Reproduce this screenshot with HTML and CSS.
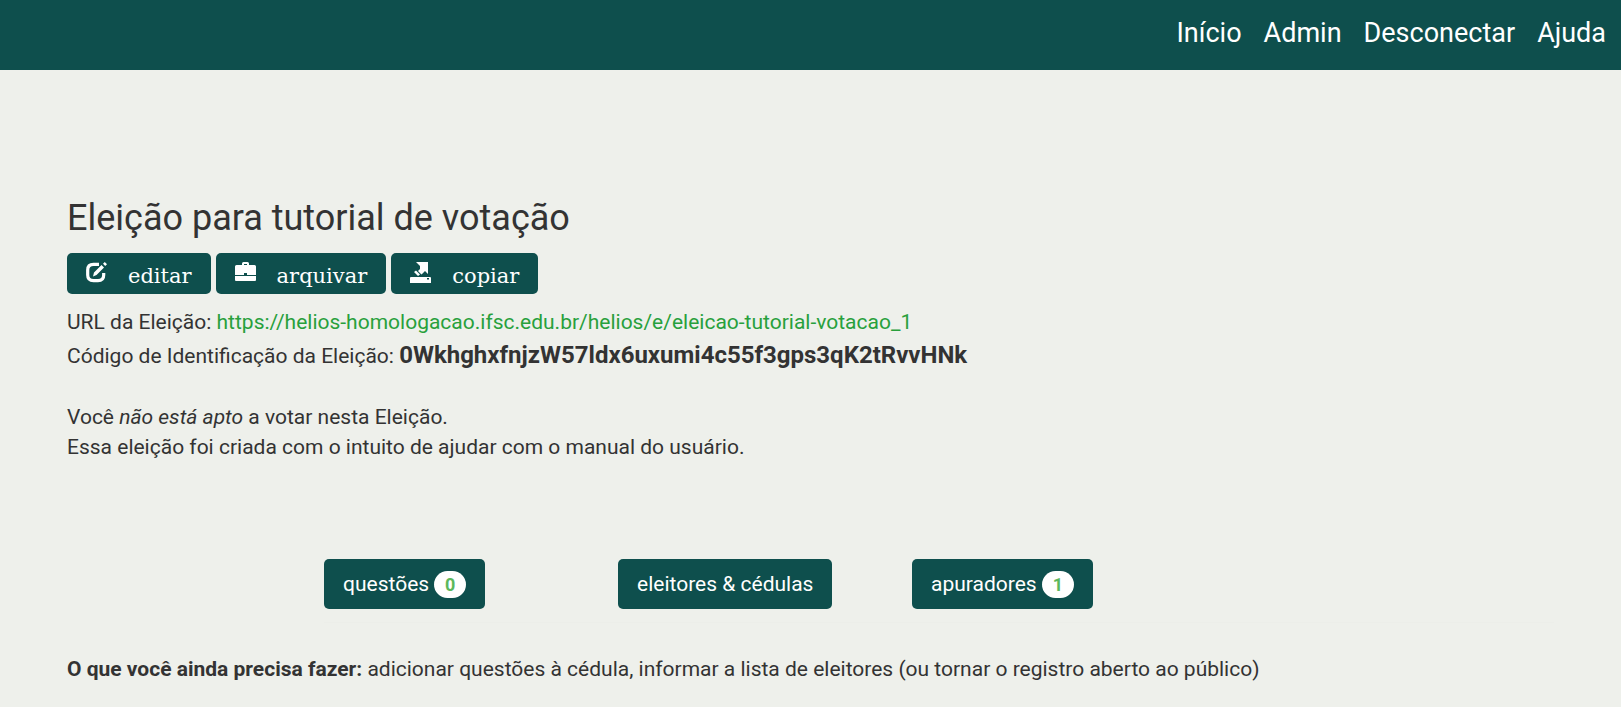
FILE: index.html
```html
<!DOCTYPE html>
<html lang="pt-BR">
<head>
<meta charset="utf-8">
<title>Eleição para tutorial de votação</title>
<link rel="stylesheet" href="styles.css">
</head>
<body>
<header class="topbar">
  <nav class="nav">
    <a href="#">Início</a>
    <a href="#">Admin</a>
    <a href="#">Desconectar</a>
    <a href="#">Ajuda</a>
  </nav>
</header>
<main class="content">
  <h1 class="title">Eleição para tutorial de votação</h1>
  <div class="actions">
    <a class="button action" href="#">
      <svg class="icon" viewBox="0 0 21 21" aria-hidden="true"><path d="M13 2.300H7.500C3.500 2.300 1.700 4.300 1.700 8V13C1.700 17 3.700 18.700 7.500 18.700H12C15.800 18.700 17.700 17 17.700 13V11" fill="none" stroke="currentColor" stroke-width="3.200"/><path d="M7 14.500L8 10.500L15.500 3L18 5.500L10.500 13ZM17 1.800L18.800 0L21 2.200L19.200 4Z" fill="currentColor"/></svg>
      <span>editar</span>
    </a>
    <a class="button action" href="#">
      <svg class="icon" viewBox="0 0 21 21" aria-hidden="true"><path d="M7 3V1.500Q7 0 8.500 0H12.500Q14 0 14 1.500V3H19.500Q21 3 21 4.500V13H12V11H9V13H0V4.500Q0 3 1.500 3ZM9 3H12V2H9ZM0 14H21V18Q21 19 20 19H1Q0 19 0 18Z" fill="currentColor" fill-rule="evenodd"/></svg>
      <span>arquivar</span>
    </a>
    <a class="button action" href="#">
      <svg class="icon" viewBox="0 0 21 21" aria-hidden="true"><path d="M6 0H18V12L15 9L11.500 12.500L8 9L10 7V4ZM6 8.500L10 12.500L8 14L4 10ZM1 15H20Q21 15 21 16V21H0V16Q0 15 1 15ZM17 16V17.500H19V16Z" fill="currentColor" fill-rule="evenodd"/></svg>
      <span>copiar</span>
    </a>
  </div>
  <p class="line">URL da Eleição: <a class="link" href="#">https://helios-homologacao.ifsc.edu.br/helios/e/eleicao-tutorial-votacao_1</a></p>
  <p class="line identifier">Código de Identificação da Eleição: <strong class="code">0WkhghxfnjzW57ldx6uxumi4c55f3gps3qK2tRvvHNk</strong></p>
  <p class="line status">Você <em>não está apto</em> a votar nesta Eleição.</p>
  <p class="line">Essa eleição foi criada com o intuito de ajudar com o manual do usuário.</p>
  <div class="sections">
    <div><a class="button section" href="#">questões <span class="badge">0</span></a></div>
    <div><a class="button section" href="#">eleitores &amp; cédulas</a></div>
    <div><a class="button section" href="#">apuradores <span class="badge">1</span></a></div>
  </div>
  <p class="line todo"><strong>O que você ainda precisa fazer:</strong> adicionar questões à cédula, informar a lista de eleitores (ou tornar o registro aberto ao público)</p>
</main>
</body>
</html>
```
FILE: styles.css
```css
* { box-sizing: border-box; }
body {
  margin: 0;
  background: #eef0eb;
  color: #333;
  font: 21px/30px Roboto, sans-serif;
}
a { text-decoration: none; }
.topbar {
  display: flex;
  justify-content: flex-end;
  background: #0e4f4d;
  padding: 15px 15px 19px;
}
.nav {
  display: flex;
  gap: 22px;
  font-size: 27px;
  line-height: 36px;
}
.nav a { color: #fff; }
.content { padding: 128px 67px 20px; }
.title {
  margin: 0 0 15px;
  font-size: 36px;
  font-weight: 400;
  line-height: 40px;
}
.actions {
  display: flex;
  gap: 5px;
  margin-bottom: 13px;
}
.button {
  display: inline-flex;
  align-items: center;
  background: #0e4f4d;
  color: #fff;
  border-radius: 5px;
  white-space: nowrap;
}
.action {
  gap: 21px;
  padding: 8px 19px 3px;
  font-family: "DejaVu Serif", serif;
}
.icon {
  width: 21px;
  height: 21px;
  margin-bottom: 7px;
}
.line { margin: 0; }
.link { color: #28a03c; }
.identifier { padding-top: 1px; }
.code {
  font-size: 24px;
  line-height: 34px;
}
.status { margin-top: 30px; }
.sections {
  display: grid;
  grid-template-columns: 294fr 294fr 642fr;
  margin: 97px 0 31px 257px;
  padding-bottom: 13px;
  border-bottom: 1px solid #eceee9;
}
.sections > div { display: flex; }
.section {
  gap: 5px;
  padding: 10px 19px;
}
.badge {
  padding: 4px 11px;
  border-radius: 14px;
  background: #fff;
  color: #5cb85c;
  font-size: 18px;
  font-weight: 700;
  line-height: 19px;
}
```
